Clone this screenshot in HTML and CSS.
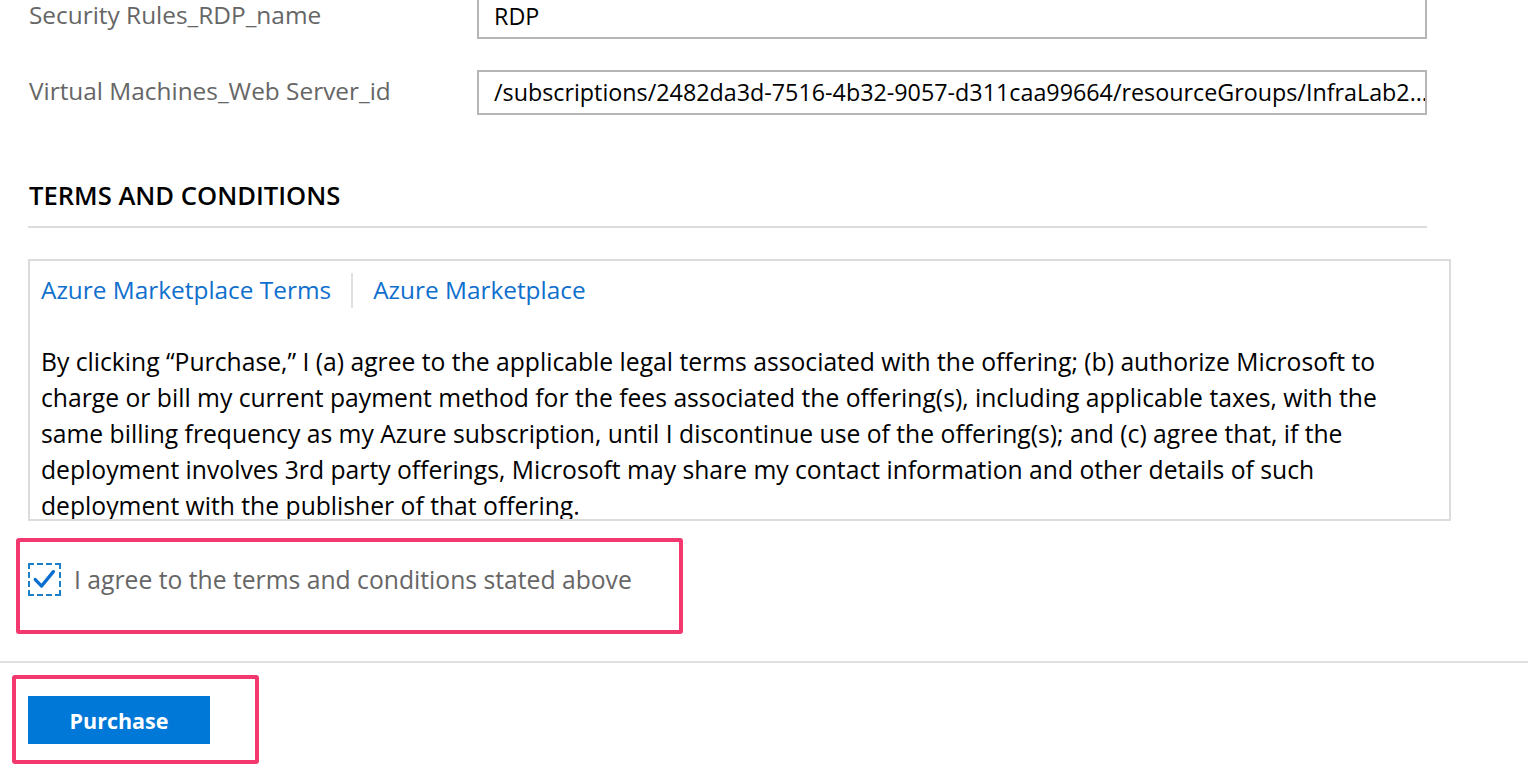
FILE: index.html
```html
<!DOCTYPE html>
<html lang="en">
<head>
<meta charset="utf-8">
<title>Purchase</title>
<link rel="stylesheet" href="styles.css">
</head>
<body>
<div class="main">
  <div class="form">
    <div class="row">
      <div class="label">Security Rules_RDP_name</div>
      <div class="input">RDP</div>
    </div>
    <div class="row">
      <div class="label">Virtual Machines_Web Server_id</div>
      <div class="input">/subscriptions/2482da3d-7516-4b32-9057-d311caa99664/resourceGroups/InfraLab2…</div>
    </div>
  </div>

  <h2 class="section-title">TERMS AND CONDITIONS</h2>

  <div class="terms-box">
    <div class="tabs">
      <a class="tab-link" href="#">Azure Marketplace Terms</a>
      <span class="tab-sep"></span>
      <a class="tab-link" href="#">Azure Marketplace</a>
    </div>
    <p class="terms-text">By clicking “Purchase,” I (a) agree to the applicable legal terms associated with the offering; (b) authorize Microsoft to<br>charge or bill my current payment method for the fees associated the offering(s), including applicable taxes, with the<br>same billing frequency as my Azure subscription, until I discontinue use of the offering(s); and (c) agree that, if the<br>deployment involves 3rd party offerings, Microsoft may share my contact information and other details of such<br>deployment with the publisher of that offering.</p>
  </div>

  <div class="highlight agree">
    <span class="checkbox">
      <svg viewBox="0 0 33 33" width="30" height="30"><path d="M6 16 L13.2 23.4 L26.6 7" fill="none" stroke="#0a6fd0" stroke-width="3.8" stroke-linecap="round" stroke-linejoin="round"/></svg>
    </span>
    <span class="agree-text">I agree to the terms and conditions stated above</span>
  </div>
</div>

<footer class="footer">
  <div class="highlight button-wrap">
    <button class="primary-btn">Purchase</button>
  </div>
</footer>
</body>
</html>
```

FILE: styles.css
```css
* { box-sizing: border-box; }

html, body {
  margin: 0;
  padding: 0;
  background: #fff;
}

body {
  font-family: "Open Sans", "Noto Sans", sans-serif;
  color: #000;
  overflow: hidden;
  height: 774px;
}

.main {
  padding-left: 28px;
}

.form {
  margin-top: -6px;
  display: flex;
  flex-direction: column;
  gap: 31px;
}

.row {
  display: flex;
  align-items: center;
}

.label {
  width: 449px;
  padding-left: 1px;
  font-size: 24.4px;
  color: #666;
  margin-top: -4px;
}

.input {
  width: 950px;
  height: 45px;
  border: 2px solid #b5b5b5;
  padding: 0 12px 0 15px;
  font-size: 23.3px;
  line-height: 41px;
  color: #000;
  white-space: nowrap;
  overflow: hidden;
}

.section-title {
  width: 1399px;
  margin: 66px 0 0 0;
  padding: 0 0 15px 1px;
  font-size: 25.6px;
  line-height: 30px;
  font-weight: 600;
  border-bottom: 2px solid #dcdcdc;
}

.terms-box {
  margin-top: 31px;
  width: 1423px;
  height: 262px;
  border: 2px solid #dcdcdc;
  padding: 11px 11px 0 11px;
  overflow: hidden;
}

.tabs {
  display: flex;
  align-items: center;
  height: 36px;
}

.tab-link {
  font-size: 24.4px;
  line-height: 36px;
  color: #0f6fcd;
  text-decoration: none;
}

.tab-sep {
  width: 2px;
  height: 35px;
  background: #e0e0e0;
  margin: 0 20px;
}

.terms-text {
  margin: 36px 0 0 0;
  font-size: 24.7px;
  line-height: 36px;
  color: #000;
  white-space: nowrap;
}

.highlight {
  border: 4px solid #f2386f;
  border-radius: 3px;
}

.agree {
  margin-top: 17px;
  margin-left: -12px;
  width: 667px;
  height: 96px;
  padding: 21px 0 0 8px;
  display: flex;
  align-items: flex-start;
}

.checkbox {
  width: 33px;
  height: 33px;
  border: 2px dashed #1b7fc9;
  display: flex;
  align-items: center;
  justify-content: center;
  flex-shrink: 0;
}

.checkbox svg { display: block; }

.agree-text {
  margin-left: 13px;
  font-size: 24.7px;
  line-height: 33px;
  color: #666;
}

.footer {
  margin-top: 27px;
  border-top: 2px solid #e0e0e0;
  padding: 12px 0 0 12px;
}

.button-wrap {
  width: 247px;
  height: 89px;
  padding: 17px 0 0 12px;
}

.primary-btn {
  width: 182px;
  height: 48px;
  border: none;
  background: #0078d7;
  color: #fff;
  font-family: "Open Sans", "Noto Sans", sans-serif;
  font-size: 21.5px;
  font-weight: 700;
  padding: 0;
  cursor: pointer;
}
```
